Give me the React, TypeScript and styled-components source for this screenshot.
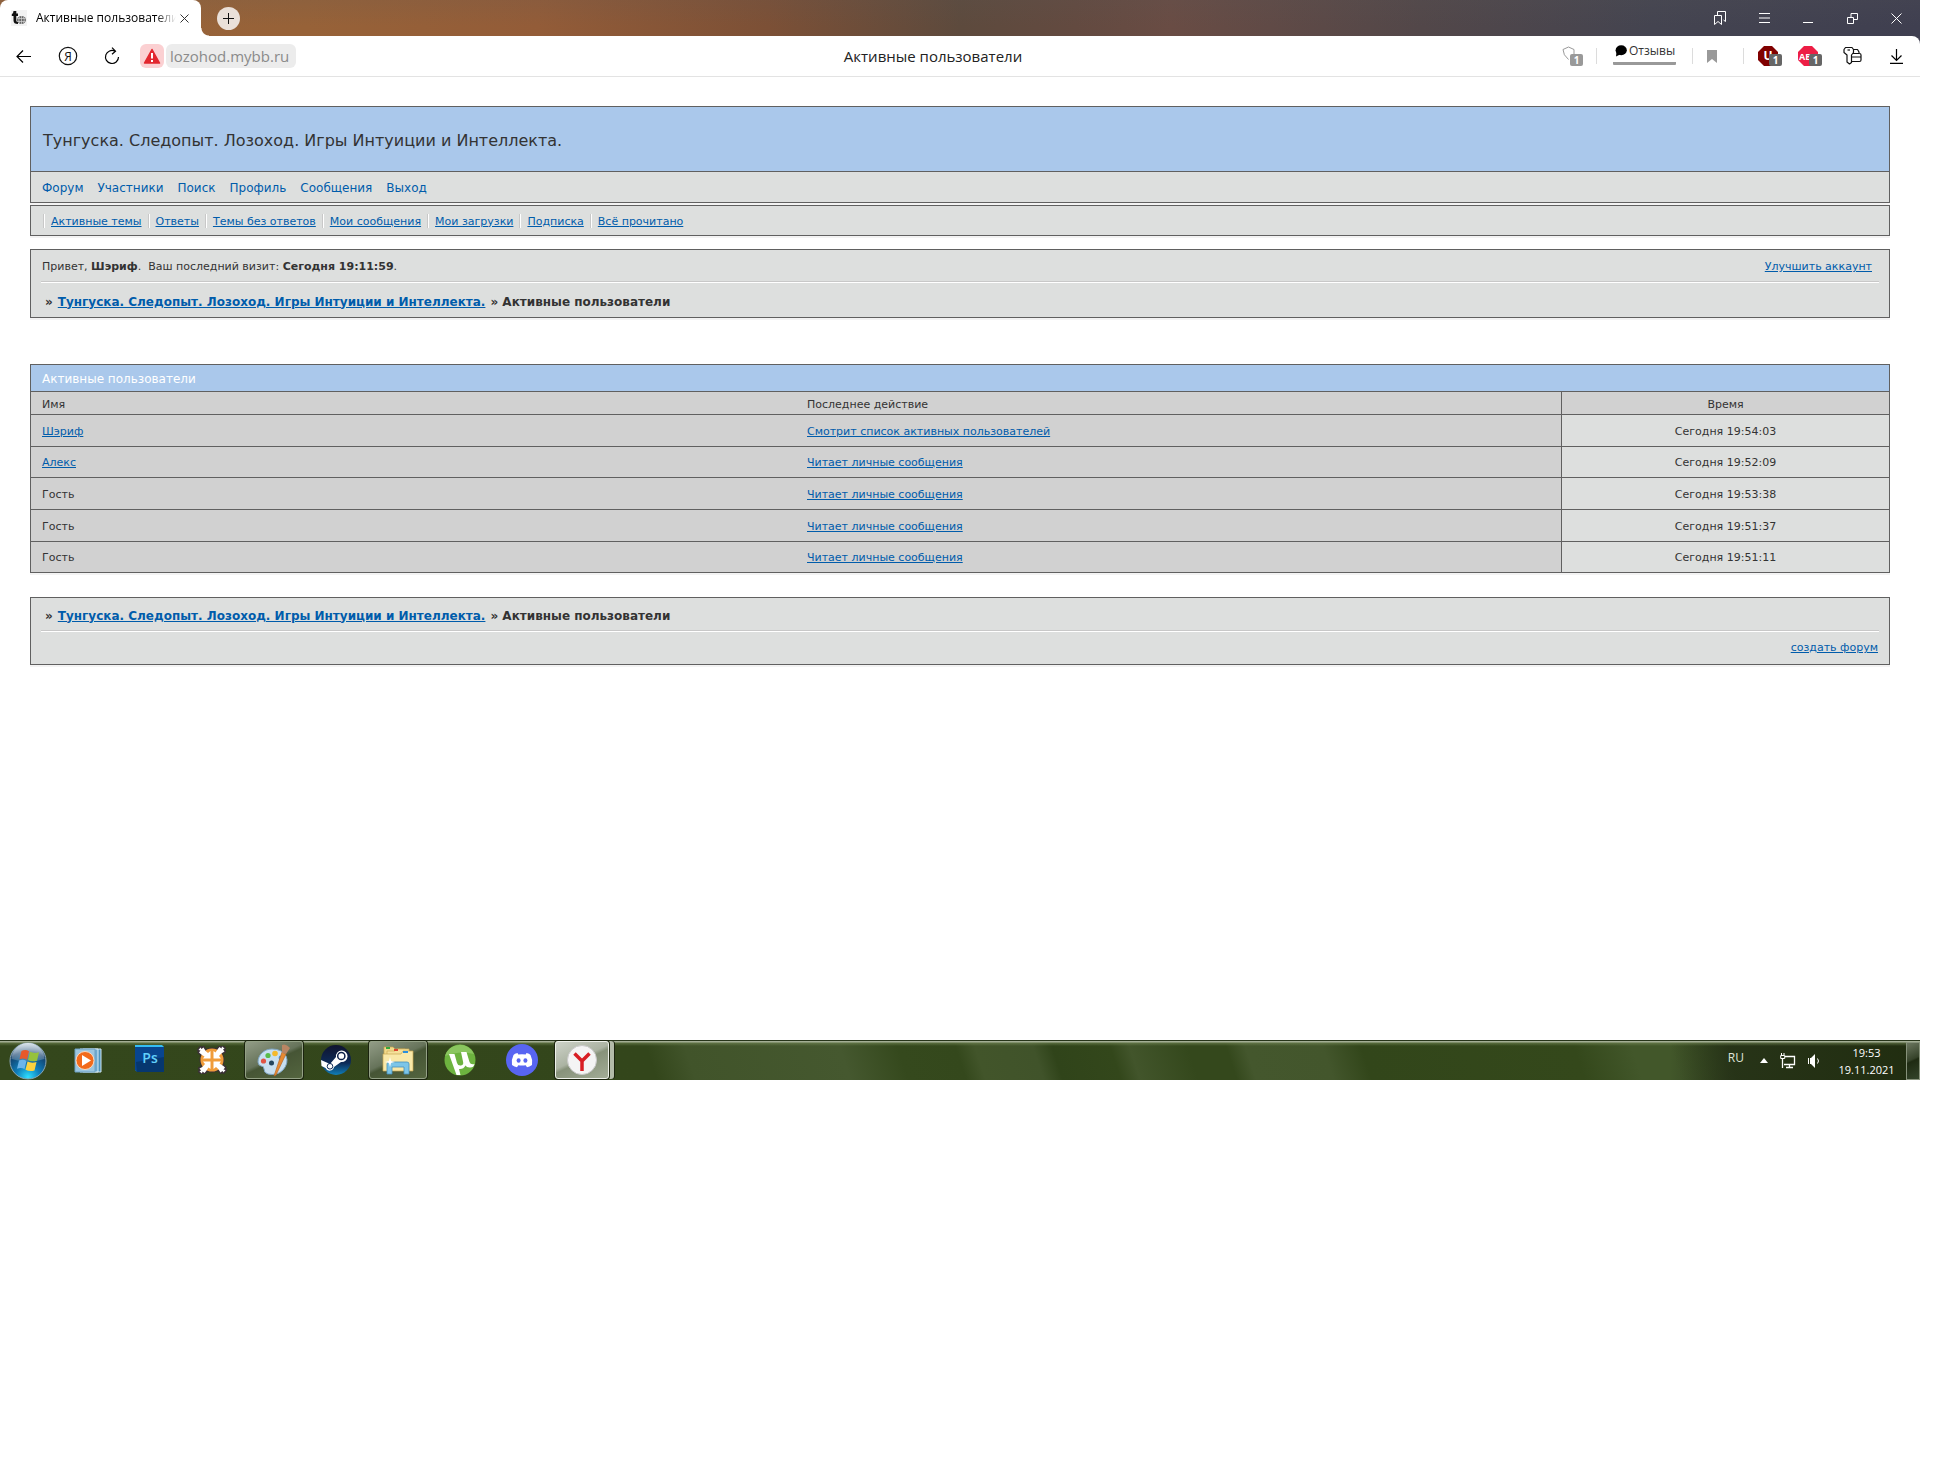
import React from "react";
import styled, { createGlobalStyle, css } from "styled-components";

const UI = `"Open Sans", "Noto Sans", sans-serif`;
const FORUM = `"DejaVu Sans", sans-serif`;

const LINE = "#606060";
const PANEL = "#dddfde";
const CELL = "#d1d1d1";
const BLUE = "#aac8eb";
const LINK = "#005cab";

const GlobalStyle = createGlobalStyle`
  *, *::before, *::after { box-sizing: border-box; }
  body { margin: 0; background: #fff; font-family: ${FORUM}; }
  button { margin: 0; padding: 0; border: 0; background: none; font: inherit; color: inherit; }
  h1, h2, p, ul { margin: 0; padding: 0; font-weight: normal; }
  ul { list-style: none; }
  svg { display: block; flex: none; }
`;

const Desktop = styled.div`
  margin-right: 16px;
`;

/* Browser window */

const BrowserChrome = styled.header`
  font-family: ${UI};
  background:
    linear-gradient(180deg, rgba(90, 90, 90, 0.15), rgba(90, 60, 0, 0) 26px),
    linear-gradient(90deg, #96633a 0%, #976238 16%, #935c38 28%, #7c5036 40%, #5d4a3d 50%, #634a40 56%, #694c44 61%, #524749 74%, #444450 86%, #3f3f50 100%);
`;

const TabStrip = styled.div`
  display: flex;
  align-items: center;
  height: 36px;
  padding-right: 2px;
`;

const Tab = styled.div`
  position: relative;
  display: flex;
  align-items: center;
  align-self: stretch;
  width: 201px;
  padding: 0 12px 0 11px;
  background: #fff;
  border-radius: 8px 8px 0 0;

  &::after {
    content: "";
    position: absolute;
    left: 100%;
    bottom: 0;
    width: 8px;
    height: 8px;
    background: radial-gradient(circle at 100% 0, transparent 7px, #fff 8px);
  }
`;

const TabTitle = styled.span`
  flex: 1;
  min-width: 0;
  margin: 0 4px 0 9px;
  overflow: hidden;
  white-space: nowrap;
  font-size: 12px;
  line-height: 20px;
  color: #000;
  mask-image: linear-gradient(90deg, #000 calc(100% - 20px), transparent);
`;

const NewTab = styled.button`
  display: grid;
  place-items: center;
  width: 23px;
  height: 23px;
  margin-left: 16px;
  border-radius: 50%;
  background: #eae0d9;
`;

const WindowButtons = styled.div`
  display: flex;
  margin-left: auto;
`;

const WindowButton = styled.button`
  display: grid;
  place-items: center;
  width: 44px;
  height: 36px;
  color: #fff;
`;

const Toolbar = styled.div`
  display: flex;
  align-items: center;
  height: 41px;
  padding: 0 17px 0 2px;
  background: #fff;
  border-bottom: 1px solid #e3e3e3;
  border-radius: 0 8px 0 0;
`;

const ToolButton = styled.button`
  display: grid;
  place-items: center;
  width: 44px;
  height: 40px;
  color: #000;
`;

const Warning = styled.button`
  display: grid;
  place-items: center;
  width: 24px;
  height: 24px;
  margin: 0 2px 0 6px;
  border-radius: 6px;
  background: #fbd0d2;
`;

const Address = styled.input`
  width: 130px;
  height: 24px;
  padding: 0 4px;
  border: 0;
  border-radius: 6px;
  background: #ececec;
  font-family: ${UI};
  font-size: 15px;
  color: #8a8a8a;
`;

const PageTitle = styled.div`
  flex: 1;
  margin-left: 8px;
  text-align: center;
  font-size: 15px;
  line-height: 20px;
  color: #222;
`;

const Extensions = styled.div`
  display: flex;
  align-items: center;
`;

const Separator = styled.i<{ $before: number; $after: number }>`
  width: 1px;
  height: 16px;
  margin: 0 ${(p) => p.$after}px 0 ${(p) => p.$before}px;
  background: #dcdcdc;
`;

const Extension = styled.button<{ $gap?: number }>`
  position: relative;
  display: grid;
  place-items: center;
  margin-right: ${(p) => p.$gap ?? 0}px;
`;

const Badge = styled.span<{ $light?: boolean }>`
  position: absolute;
  right: 0;
  bottom: 0;
  width: 13px;
  height: 12px;
  border-radius: 2px;
  background: ${(p) => (p.$light ? "#999" : "#666")};
  color: #fff;
  font-size: 10px;
  font-weight: 700;
  line-height: 12px;
  text-align: center;
`;

const Feedback = styled.button`
  display: flex;
  align-items: center;
  gap: 2px;
  width: 63px;
  height: 22px;
  margin-bottom: 4px;
  padding: 0 0 4px 2px;
  border-bottom: 3px solid #999;
  border-radius: 1px;
  font-size: 12px;
  line-height: 14px;
  color: #333;
`;

/* Forum page */

const Page = styled.main`
  min-height: 963px;
  padding: 29px 30px 0;
  color: #333;
  font-size: 11px;
  line-height: 16px;
`;

const Box = styled.section<{ $gap: number }>`
  margin-bottom: ${(p) => p.$gap}px;
  border: 1px solid ${LINE};
  background: ${PANEL};
  box-shadow: 0 2px 0 #f3f3f3;
`;

const ForumTitle = styled.h1`
  display: flex;
  align-items: center;
  height: 65px;
  padding: 4px 12px 0;
  border-bottom: 1px solid ${LINE};
  background: ${BLUE};
  font-size: 16px;
  line-height: 24px;
`;

const MainNav = styled.ul`
  display: flex;
  align-items: center;
  gap: 14px;
  height: 30px;
  padding: 2px 11px 0;
  font-size: 12px;
`;

const SubNav = styled.ul`
  display: flex;
  align-items: center;
  height: 29px;
  padding: 2px 12px 0;
`;

const SubNavItem = styled.li`
  display: flex;
  align-items: center;
  height: 16px;
  padding: 0 6px 0 0;

  &::before {
    content: "";
    width: 2px;
    height: 14px;
    margin: 0 6px 2px 0;
    border-left: 1px solid #c8c8c8;
    background: #fff;
  }
`;

const Link = styled.a<{ $plain?: boolean }>`
  color: ${LINK};
  text-decoration: ${(p) => (p.$plain ? "none" : "underline")};
`;

const WelcomeRow = styled.div`
  display: flex;
  align-items: center;
  justify-content: space-between;
  height: 31px;
  padding: 3px 17px 0 11px;
`;

const FooterRow = styled.div`
  display: flex;
  align-items: center;
  justify-content: flex-end;
  height: 32px;
  padding: 0 11px;
`;

const Rule = styled.hr`
  height: 2px;
  margin: 0 10px;
  border: 0;
  border-top: 1px solid #c8c8c8;
  background: #fff;
`;

const Crumbs = styled.p<{ $tall?: boolean }>`
  display: flex;
  align-items: center;
  gap: 5px;
  height: ${(p) => (p.$tall ? 34 : 32)}px;
  padding: 3px 14px 0;
  font-size: 12px;
  font-weight: bold;
`;

const Bar = styled.h2`
  height: 26px;
  padding: 1px 11px 0;
  background: ${BLUE};
  color: #fff;
  font-size: 12px;
  line-height: 26px;
`;

const UsersTable = styled.table`
  width: 100%;
  table-layout: fixed;
  border-collapse: separate;
  border-spacing: 0;
`;

const cell = css`
  padding: 2px 11px 0;
  border-top: 1px solid ${LINE};
  background: ${CELL};
  font-weight: normal;
  text-align: left;
`;

const Head = styled.th<{ $time?: boolean }>`
  ${cell}
  padding-top: 3px;
  height: 23px;
  ${(p) => p.$time && css`width: 328px; border-left: 1px solid ${LINE}; text-align: center;`}
`;

const Cell = styled.td<{ $time?: boolean }>`
  ${cell}
  ${(p) => p.$time && css`border-left: 1px solid ${LINE}; background: ${PANEL}; text-align: center;`}
`;

const Row = styled.tr`
  height: 32px;
  &:nth-child(3n + 2) { height: 31px; }
`;

/* Taskbar */

const Taskbar = styled.footer`
  display: flex;
  height: 40px;
  border-top: 1px solid #27351a;
  font-family: ${UI};
  color: #fff;
  background:
    linear-gradient(180deg, #a3ae94 0 1px, rgba(120, 140, 90, 0.55) 2px, rgba(60, 80, 30, 0) 5px),
    linear-gradient(90deg, transparent 87%, rgba(28, 36, 20, 0.55) 90%, rgba(20, 28, 8, 0.6) 100%),
    linear-gradient(72deg, #34471c 0%, #33461b 34%, #41542a 36%, #45582f 44%, #35491d 47%, #34481c 50%, #42552a 51%, #40532a 54%, #30441a 55%, #33471b 58%, #42552b 59%, #34481c 62%, #34481c 64%, #44572d 65%, #43562c 69%, #32461a 71%, #34481b 82%, #42572a 85%, #42572a 87%, #34471c 90%);
`;

const StartButton = styled.button`
  display: grid;
  place-items: center;
  width: 55px;
`;

const Apps = styled.nav`
  display: flex;
  gap: 4px;
  padding-left: 4px;
`;

const AppButton = styled.button<{ $open?: boolean; $active?: boolean }>`
  display: grid;
  place-items: center;
  width: ${(p) => (p.$active ? 54 : 58)}px;
  height: 38px;
  border: 1px solid transparent;
  border-radius: 3px;
  ${(p) => p.$open && css`
    border-color: #93a085;
    background: linear-gradient(155deg, #929c86 0%, #66735a 45%, #465535 52%, #54653f 100%);
    box-shadow: 0 0 0 1px #1b240f;
  `}
  ${(p) => p.$active && css`
    border-color: #eef1ea;
    background: linear-gradient(155deg, #cdd2c8 0%, #abb3a2 45%, #87927a 52%, #a3ad97 100%);
    box-shadow: 0 0 0 1px #1b240f, 5px 0 0 0 #b3bba9, 6px 0 0 0 #1b240f;
  `}
`;

const Tray = styled.div`
  display: flex;
  align-items: center;
  gap: 12px;
  margin-left: auto;
`;

const Language = styled.button`
  margin: 0 4px 6px 0;
  font-size: 12px;
  line-height: 16px;
  color: #dfe3d8;
`;

const TrayButton = styled.button`
  display: grid;
  place-items: center;
`;

const ClockArea = styled.div`
  display: flex;
  align-items: center;
  gap: 6px;
`;

const Clock = styled.time`
  width: 67px;
  font-size: 11px;
  line-height: 17px;
  text-align: center;
`;

const ShowDesktop = styled.button`
  width: 14px;
  height: 38px;
  border: 1px solid #86917a;
  background: linear-gradient(155deg, #6b765f, #36432a 45%, #1f2b12 50%, #33442a);
`;

/* Icons */

const Favicon = () => (
  <svg width="16" height="16" viewBox="0 0 16 16">
    <rect width="16" height="16" fill="#f3f3f3" />
    <path d="M2.500 1h2.800v2.500H7V6H5.300v4.500q0 1.500 1.700 1.500v2Q2.500 14 2.500 10.500V6H.8V4.200q1.700-.7 1.700-3.200z" fill="#111" />
    <ellipse cx="10.500" cy="10" rx="4.500" ry="4" fill="#666" />
    <path d="M6.500 8.500h8M6.500 11.500h8M10.500 6v8M8.500 6.800q-1.500 3.200 0 6.400M12.500 6.800q1.500 3.200 0 6.400" stroke="#d5d5d5" strokeWidth=".7" fill="none" />
  </svg>
);

const Stroke = ({ d, w, h, sw = 1, color = "currentColor" }: { d: string; w: number; h: number; sw?: number; color?: string }) => (
  <svg width={w} height={h} viewBox={`0 0 ${w} ${h}`} fill="none" stroke={color} strokeWidth={sw}>
    <path d={d} />
  </svg>
);

const YandexHome = () => (
  <svg width="20" height="20" viewBox="0 0 20 20">
    <circle cx="10" cy="10" r="8.700" fill="none" stroke="#111" strokeWidth="1.200" />
    <text x="10" y="14.500" fontSize="12" textAnchor="middle" fontFamily="Open Sans, sans-serif" fill="#111">Я</text>
  </svg>
);

const WarningIcon = () => (
  <svg width="18" height="17" viewBox="0 0 18 17">
    <path d="M9 1.500 16.500 15h-15z" fill="#e2272f" stroke="#e2272f" strokeWidth="1.500" strokeLinejoin="round" />
    <path d="M9 5v5.500M9 12v2" stroke="#fff" strokeWidth="2" />
  </svg>
);

const Bubble = () => (
  <svg width="12" height="12" viewBox="0 0 12 12">
    <ellipse cx="6.200" cy="5.200" rx="5.600" ry="5" fill="#000" />
    <path d="M1.500 7 1 11.500 6 9z" fill="#000" />
  </svg>
);

const Octagon = ({ fill, label, size }: { fill: string; label: string; size: number }) => (
  <svg width="24" height="20" viewBox="0 0 24 20">
    <path d="M6 0h8l6 6v8l-6 6H6l-6-6V6z" fill={fill} />
    <text x="10" y="14" fontSize={size} fontWeight="700" textAnchor="middle" fontFamily="Open Sans, sans-serif" fill="#fff">{label}</text>
  </svg>
);

const KeyIcon = () => (
  <svg width="19" height="20" viewBox="0 0 19 20" fill="none" stroke="#111" strokeWidth="1.200" strokeLinejoin="round">
    <path d="M2.500 1.500h6.500l1.500 2v3L8.500 9v7.500l-2 1.500L4 16V9L1 6.500v-3z" />
    <path d="M4.500 4h2.500" />
    <path d="M10.500 3.500h4l1.500 2.500v1.500M10 7.500h6.500q1.500 0 1.500 1.500v5q0 1.500-1.500 1.500H9M9 11h9" />
  </svg>
);

const StartOrb = () => (
  <svg width="38" height="38" viewBox="0 0 38 38">
    <defs>
      <radialGradient id="orb" cx=".5" cy=".95" r=".95">
        <stop offset="0" stopColor="#2fe0ff" />
        <stop offset=".35" stopColor="#0f7fbb" />
        <stop offset=".75" stopColor="#123f6b" />
        <stop offset="1" stopColor="#6c93b2" />
      </radialGradient>
      <linearGradient id="gloss" x1="0" y1="0" x2="0" y2="1">
        <stop offset="0" stopColor="#fff" stopOpacity=".75" />
        <stop offset="1" stopColor="#fff" stopOpacity=".15" />
      </linearGradient>
    </defs>
    <circle cx="19" cy="19" r="18" fill="url(#orb)" stroke="#8aa5b4" />
    <path d="M2.500 17a16.500 16 0 0 1 33 0q-16 5-33 0z" fill="url(#gloss)" />
    <path d="M12.500 9q4-2 7.500.2l-2 8.500q-3.500-2-7.500-.4z" fill="#e8592a" />
    <path d="M21 9.800q4 2 9 .4l-2 8.500q-5 1.500-9-.6z" fill="#96c23c" />
    <path d="M10 18.500q4-1.700 7.500.4l-2 8.200q-3.500-2-7.500-.3z" fill="#6cb5ea" />
    <path d="M18.500 19.500q4 2 9 .5l-2 8.500q-5 1.500-9-.8z" fill="#fbd23f" />
  </svg>
);

const MediaPlayer = () => (
  <svg width="28" height="28" viewBox="0 0 28 28">
    <path d="M9 3h18v23H9z" fill="#4e93bd" stroke="#cfe6f3" />
    <path d="M6 3h18v23H6z" fill="#6fabd0" stroke="#dceef8" />
    <path d="M1 3h20v23H1z" fill="#9cc6e0" stroke="#6da1c4" />
    <circle cx="11" cy="14.500" r="9" fill="#f26a1b" stroke="#fbd9bd" />
    <path d="m8 9 9 5.500L8 20z" fill="#fff" />
  </svg>
);

const Photoshop = () => (
  <svg width="30" height="30" viewBox="0 0 30 30">
    <path d="M0 0h27l2 2v25H3l-3-2z" fill="#35bdf3" />
    <path d="M0 2h29v25H2l-2-2z" fill="#08458f" />
    <path d="M1 17 29 12v15H2z" fill="#06376f" />
    <text x="15" y="18" fontSize="14" fontWeight="600" textAnchor="middle" fontFamily="Open Sans, sans-serif" fill="#62d1fb">Ps</text>
  </svg>
);

const ModManager = () => (
  <svg width="30" height="28" viewBox="0 0 30 28">
    <defs>
      <path id="inward" d="M13.500 12.500V5L11 7Q8 5 6.500 1.500L4.500 3 3.500 1.500 1.500 4l2 .5L2 6.500Q4 8.500 7.500 10.500L6 12.500z" />
    </defs>
    <g fill="#3a3136" stroke="#3a3136" strokeWidth="3" strokeLinejoin="round">
      <circle cx="15" cy="14" r="11" />
      <use href="#inward" />
      <use href="#inward" transform="rotate(90 15 14)" />
      <use href="#inward" transform="rotate(180 15 14)" />
      <use href="#inward" transform="rotate(270 15 14)" />
    </g>
    <circle cx="15" cy="14" r="11.500" fill="#f09c3a" />
    <g fill="#fff">
      <use href="#inward" />
      <use href="#inward" transform="rotate(90 15 14)" />
      <use href="#inward" transform="rotate(180 15 14)" />
      <use href="#inward" transform="rotate(270 15 14)" />
    </g>
  </svg>
);

const Paint = () => (
  <svg width="34" height="34" viewBox="0 0 34 34">
    <path d="M15 6C7 6 1 12 1 19q0 3 3 4 3 0 3 3 0 4 4 5 9 2 15-4 6-7 3-14Q25 6 15 6z" fill="#c8dff0" stroke="#7fa5c3" />
    <circle cx="14.500" cy="20" r="2.500" fill="#24445c" />
    <circle cx="6.500" cy="18" r="2.600" fill="#e05545" />
    <circle cx="11" cy="12.500" r="2.600" fill="#58bb49" />
    <circle cx="18" cy="10.500" r="2.800" fill="#f5b92b" />
    <circle cx="24" cy="15" r="2.400" fill="#4b96dc" />
    <path d="M25 9 29 11 19 32l-2 1z" fill="#e88a32" stroke="#b15f1c" strokeWidth=".6" />
    <path d="M25 10 25 2q4-2 8 3l-4 6z" fill="#b98563" />
  </svg>
);

const Steam = () => (
  <svg width="30" height="30" viewBox="0 0 30 30">
    <defs>
      <linearGradient id="steam" x1="0" y1="0" x2="0" y2="1">
        <stop offset="0" stopColor="#10142f" />
        <stop offset=".6" stopColor="#0d2a57" />
        <stop offset="1" stopColor="#107fb8" />
      </linearGradient>
    </defs>
    <circle cx="15" cy="15" r="15" fill="url(#steam)" />
    <path d="M0 15 9 19 15 12a5.800 5.800 0 1 1 5 5l-7 5a4.500 4.500 0 0 1-8.500 1L.5 21z" fill="#fff" />
    <circle cx="20.300" cy="11" r="3.600" fill="#fff" stroke="#0d2048" strokeWidth="1.500" />
    <circle cx="9" cy="21.300" r="2.800" fill="none" stroke="#0d2a57" />
  </svg>
);

const Explorer = () => (
  <svg width="34" height="30" viewBox="0 0 34 30">
    <path d="M3 2h9l2 2h10v20H3z" fill="#f1d98a" stroke="#c5a44b" strokeWidth=".7" />
    <path d="M5 2h4v2H5z" fill="#34a83b" />
    <path d="M6 6h8l2-2h12v20H6z" fill="#f5e09a" stroke="#cfae57" strokeWidth=".7" />
    <path d="M13 4h4v2h-4z" fill="#d9452f" />
    <path d="M2 9h18l2-3h10v20H2z" fill="#f9e8a8" stroke="#c9a850" strokeWidth=".7" />
    <path d="M22 6h5v2h-5z" fill="#2b8fdc" />
    <path d="M6 29V19q0-2 2-2h18q2 0 2 2v10h-5v-7H11v7z" fill="#7cc5e8" stroke="#4591bd" strokeWidth=".8" />
    <path d="m9 12 1 4 4 1-4 1-1 4-1-4-4-1 4-1z" fill="#fff" />
  </svg>
);

const Torrent = () => (
  <svg width="32" height="32" viewBox="0 0 32 32">
    <circle cx="16" cy="16" r="15.500" fill="#6db33f" />
    <path d="M1 12a15.500 15.500 0 0 1 29-2Q16 6 1 12z" fill="#8ac65f" />
    <path d="M5 10h5.500l2.500 9q1 3 4 2.500t2-4L17 8h5.500l3 10q1 3 5 2-1 4-5 3.500-3 0-4-2-2 4-6.500 3.500l1.500 6h-4z" fill="#fff" />
  </svg>
);

const Discord = () => (
  <svg width="32" height="32" viewBox="0 0 32 32">
    <circle cx="16" cy="16" r="16" fill="#5865f2" />
    <path d="M11.500 9Q8.500 9.500 7.500 11 5 16 6 21q2.500 2 5 2.200l1.300-2q3.700.8 7.400 0l1.300 2q2.500-.2 5-2.200 1-5-1.500-10-1-1.500-4-2l-.8 1.500q-3.700-.5-7.400 0z" fill="#fff" />
    <ellipse cx="12.600" cy="16.500" rx="2" ry="2.300" fill="#5865f2" />
    <ellipse cx="19.400" cy="16.500" rx="2" ry="2.300" fill="#5865f2" />
  </svg>
);

const YandexBrowser = () => (
  <svg width="30" height="30" viewBox="0 0 30 30">
    <circle cx="15" cy="15" r="14.500" fill="#f4f4f4" stroke="#c9c9c9" />
    <path d="M7.500 8.500 15 16l7.500-7.500M15 15v11" stroke="#d81e24" strokeWidth="3.500" fill="none" />
  </svg>
);

const Network = () => (
  <svg width="16" height="16" viewBox="0 0 16 16" fill="none" stroke="#fff">
    <path d="M5 3.500h9.500v8H4M9.500 12v2M6 14.500h7M2.500 6v9" strokeWidth="1.300" />
    <path d="M.7 2.500h4v3h-4zM1.500 0v2M4 0v2" strokeWidth="1" />
  </svg>
);

const Speaker = () => (
  <svg width="13" height="14" viewBox="0 0 13 14">
    <path d="M0 4h1v6H0zM2 4h1l4-4v14l-4-4H2z" fill="#fff" />
    <path d="M9.500 4.500q2 2.500 0 5" stroke="#fff" fill="none" />
  </svg>
);

/* Data */

const SITE = "Тунгуска. Следопыт. Лозоход. Игры Интуиции и Интеллекта.";
const TITLE = "Активные пользователи";

const MAIN_LINKS = ["Форум", "Участники", "Поиск", "Профиль", "Сообщения", "Выход"];
const SUB_LINKS = ["Активные темы", "Ответы", "Темы без ответов", "Мои сообщения", "Мои загрузки", "Подписка", "Всё прочитано"];

const USERS = [
  { name: "Шэриф", member: true, action: "Смотрит список активных пользователей", time: "19:54:03" },
  { name: "Алекс", member: true, action: "Читает личные сообщения", time: "19:52:09" },
  { name: "Гость", member: false, action: "Читает личные сообщения", time: "19:53:38" },
  { name: "Гость", member: false, action: "Читает личные сообщения", time: "19:51:37" },
  { name: "Гость", member: false, action: "Читает личные сообщения", time: "19:51:11" },
];

const APPS = [
  { name: "Windows Media Player", icon: <MediaPlayer /> },
  { name: "Photoshop", icon: <Photoshop /> },
  { name: "Mod Manager", icon: <ModManager /> },
  { name: "Paint", icon: <Paint />, open: true },
  { name: "Steam", icon: <Steam /> },
  { name: "Проводник", icon: <Explorer />, open: true },
  { name: "uTorrent", icon: <Torrent /> },
  { name: "Discord", icon: <Discord /> },
  { name: "Яндекс.Браузер", icon: <YandexBrowser />, open: true, active: true },
];

const Breadcrumbs = ({ tall }: { tall?: boolean }) => (
  <Crumbs $tall={tall}>
    <span>»</span>
    <Link href="#">{SITE}</Link>
    <span>» {TITLE}</span>
  </Crumbs>
);

export default function App() {
  return (
    <Desktop>
      <GlobalStyle />
      <BrowserChrome>
        <TabStrip>
          <Tab>
            <Favicon />
            <TabTitle>{TITLE}</TabTitle>
            <button aria-label="Закрыть вкладку"><Stroke w={9} h={9} d="M.5.5l8 8M8.500.5l-8 8" color="#333" /></button>
          </Tab>
          <NewTab aria-label="Новая вкладка"><Stroke w={11} h={11} d="M5.500 0v11M0 5.500h11" color="#111" /></NewTab>
          <WindowButtons>
            <WindowButton aria-label="Закладки">
              <Stroke w={12} h={14} d="M.5 4.500h7v9L4 10.500.5 13.500zM3.500 4V.5h8v10L9.500 9" />
            </WindowButton>
            <WindowButton aria-label="Меню"><Stroke w={11} h={10} d="M0 .5h11M0 5h11M0 9.500h11" /></WindowButton>
            <WindowButton aria-label="Свернуть"><Stroke w={10} h={10} d="M0 9.500h10" /></WindowButton>
            <WindowButton aria-label="Восстановить"><Stroke w={11} h={11} d="M.5 4.500h6v6h-6zM4 4V.5h6.500v6H7" /></WindowButton>
            <WindowButton aria-label="Закрыть"><Stroke w={11} h={11} d="M.5.5l10 10M10.500.5l-10 10" /></WindowButton>
          </WindowButtons>
        </TabStrip>
        <Toolbar>
          <ToolButton aria-label="Назад"><Stroke w={16} h={13} sw={1.2} d="M15 6.500H1M7 .5l-6 6 6 6" /></ToolButton>
          <ToolButton aria-label="Яндекс"><YandexHome /></ToolButton>
          <ToolButton aria-label="Обновить"><Stroke w={16} h={18} sw={1.2} d="M14.500 10A6.500 6.500 0 1 1 11 4.200M8 .7l3.500 3.500L8 7.200" /></ToolButton>
          <Warning aria-label="Сайт не защищён"><WarningIcon /></Warning>
          <Address aria-label="Адрес" defaultValue="lozohod.mybb.ru" />
          <PageTitle>{TITLE}</PageTitle>
          <Extensions>
            <Extension aria-label="Защита">
              <Stroke w={21} h={20} d="M6.500 13.500Q1 9 1 3.500L6.500 1 12 3.500V8" color="#999" />
              <Badge $light>1</Badge>
            </Extension>
            <Separator $before={13} $after={16} />
            <Feedback><Bubble />Отзывы</Feedback>
            <Separator $before={16} $after={14} />
            <Extension aria-label="В закладки">
              <svg width="10" height="13" viewBox="0 0 10 13"><path d="M0 0h10v13L5 9l-5 4z" fill="#999" /></svg>
            </Extension>
            <Separator $before={26} $after={14} />
            <Extension aria-label="uBlock" $gap={16}><Octagon fill="#800000" label="U" size={12} /><Badge>1</Badge></Extension>
            <Extension aria-label="Adblock" $gap={21}><Octagon fill="#ed1e45" label="ABP" size={9} /><Badge>1</Badge></Extension>
            <Extension aria-label="Пароли" $gap={28}><KeyIcon /></Extension>
            <Extension aria-label="Загрузки"><Stroke w={13} h={15} sw={1.2} d="M6.500 0v11.500M1.500 6.500l5 5 5-5M0 14.400h13" color="#000" /></Extension>
          </Extensions>
        </Toolbar>
      </BrowserChrome>

      <Page>
        <Box $gap={2}>
          <ForumTitle>{SITE}</ForumTitle>
          <MainNav>
            {MAIN_LINKS.map((t) => <li key={t}><Link $plain href="#">{t}</Link></li>)}
          </MainNav>
        </Box>
        <Box $gap={13}>
          <SubNav>
            {SUB_LINKS.map((t) => <SubNavItem key={t}><Link href="#">{t}</Link></SubNavItem>)}
          </SubNav>
        </Box>
        <Box $gap={46}>
          <WelcomeRow>
            <span>Привет, <b>Шэриф</b>. &nbsp;Ваш последний визит: <b>Сегодня 19:11:59</b>.</span>
            <Link href="#">Улучшить аккаунт</Link>
          </WelcomeRow>
          <Rule />
          <Breadcrumbs tall />
        </Box>
        <Box $gap={24}>
          <Bar>{TITLE}</Bar>
          <UsersTable>
            <thead>
              <tr>
                <Head scope="col">Имя</Head>
                <Head scope="col">Последнее действие</Head>
                <Head scope="col" $time>Время</Head>
              </tr>
            </thead>
            <tbody>
              {USERS.map((u) => (
                <Row key={u.time}>
                  <Cell>{u.member ? <Link href="#">{u.name}</Link> : u.name}</Cell>
                  <Cell><Link href="#">{u.action}</Link></Cell>
                  <Cell $time>Сегодня {u.time}</Cell>
                </Row>
              ))}
            </tbody>
          </UsersTable>
        </Box>
        <Box $gap={0}>
          <Breadcrumbs />
          <Rule />
          <FooterRow><Link href="#">создать форум</Link></FooterRow>
        </Box>
      </Page>

      <Taskbar>
        <StartButton aria-label="Пуск"><StartOrb /></StartButton>
        <Apps>
          {APPS.map((a) => (
            <AppButton key={a.name} aria-label={a.name} $open={a.open} $active={a.active}>{a.icon}</AppButton>
          ))}
        </Apps>
        <Tray>
          <Language>RU</Language>
          <TrayButton aria-label="Показать скрытые значки">
            <svg width="8" height="5" viewBox="0 0 8 5"><path d="M4 0l4 5H0z" fill="#fff" /></svg>
          </TrayButton>
          <TrayButton aria-label="Сеть"><Network /></TrayButton>
          <TrayButton aria-label="Громкость"><Speaker /></TrayButton>
          <ClockArea>
            <Clock>19:53<br />19.11.2021</Clock>
            <ShowDesktop aria-label="Показать рабочий стол" />
          </ClockArea>
        </Tray>
      </Taskbar>
    </Desktop>
  );
}
